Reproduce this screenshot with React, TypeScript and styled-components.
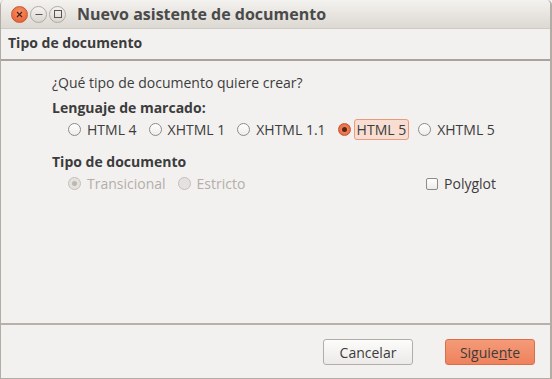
import styled, { createGlobalStyle, css } from "styled-components";

const GlobalStyle = createGlobalStyle`
  html, body {
    margin: 0;
    padding: 0;
    background: #f2f1f0;
  }
  body {
    font-family: "Open Sans", "Liberation Sans", sans-serif;
    font-size: 14px;
    color: #3c3c3c;
  }
`;

const Window = styled.div`
  width: 552px;
  height: 379px;
  box-sizing: border-box;
  display: flex;
  flex-direction: column;
  background: #f2f1f0;
  border-left: 1px solid #b3aca5;
  border-right: 2px solid #b3aca5;
  border-bottom: 1px solid #b3aca5;
  border-radius: 5px 5px 0 0;
  overflow: hidden;
`;

const TitleBar = styled.div`
  height: 28px;
  flex: none;
  display: flex;
  align-items: center;
  padding-left: 10px;
  background: linear-gradient(#f4f2ef, #dcd8d2);
  border-bottom: 1px solid #cfcac4;
`;

const Controls = styled.div`
  display: flex;
  gap: 2px;
  margin-right: 11px;
`;

const CtrlButton = styled.div<{ $close?: boolean }>`
  width: 17px;
  height: 17px;
  border-radius: 50%;
  box-sizing: border-box;
  display: flex;
  align-items: center;
  justify-content: center;
  ${({ $close }) =>
    $close
      ? css`
          background: radial-gradient(circle at 50% 35%, #f8916a, #e4582a);
          border: 1px solid #c9582e;
        `
      : css`
          background: linear-gradient(#f5f4f2, #d9d5d0);
          border: 1px solid #b0aaa3;
        `}
`;

const Title = styled.div`
  font-weight: bold;
  font-size: 16px;
  color: #4a4a4a;
`;

const Header = styled.div`
  height: 32px;
  flex: none;
  display: flex;
  align-items: center;
  padding: 0 0 3px 7px;
  box-sizing: border-box;
  font-weight: bold;
  border-bottom: 2px solid #a8a39d;
  color: #3c3c3c;
`;

const Content = styled.div`
  flex: 1;
  padding: 12px 0 0 51px;
  border-bottom: 2px solid #b7b1aa;
`;

const Question = styled.div`
  height: 20px;
  line-height: 20px;
`;

const SectionLabel = styled.div<{ $gap?: number }>`
  margin-top: ${({ $gap }) => $gap ?? 5}px;
  font-weight: bold;
  height: 19px;
  line-height: 19px;
`;

const OptionRow = styled.div`
  display: flex;
  align-items: center;
  height: 25px;
  padding-left: 16px;
  box-sizing: border-box;
`;

const Option = styled.label<{ $disabled?: boolean }>`
  display: flex;
  align-items: center;
  gap: 3px;
  margin-right: 9px;
  color: ${({ $disabled }) => ($disabled ? "#b4aea8" : "#3c3c3c")};
`;

const OptionText = styled.span<{ $selected?: boolean }>`
  padding: 0 2px;
  line-height: 19px;
  border: 1px solid transparent;
  border-radius: 3px;
  ${({ $selected }) =>
    $selected &&
    css`
      background: #f8ded2;
      border-color: #ec9a7c;
    `}
`;

const Radio = styled.span<{ $checked?: boolean; $disabled?: boolean }>`
  width: 13px;
  height: 13px;
  border-radius: 50%;
  box-sizing: border-box;
  display: inline-flex;
  align-items: center;
  justify-content: center;
  background: linear-gradient(#ffffff, #eeecea);
  border: 1px solid #8f8a85;
  ${({ $checked }) =>
    $checked &&
    css`
      background: radial-gradient(circle, #f39a78, #e0582c);
      border-color: #c75630;
    `}
  ${({ $disabled }) =>
    $disabled &&
    css`
      background: #e4e1de;
      border-color: #c4bfba;
    `}
`;

const Dot = styled.span<{ $disabled?: boolean }>`
  width: 5px;
  height: 5px;
  border-radius: 50%;
  background: ${({ $disabled }) => ($disabled ? "#bdb7b1" : "#5a2412")};
`;

const DisabledRow = styled(OptionRow)`
  width: 456px;
  height: 25px;
`;

const Spacer = styled.div`
  flex: 1;
`;

const Checkbox = styled.span`
  width: 12px;
  height: 12px;
  box-sizing: border-box;
  border: 1px solid #8f8a85;
  border-radius: 2px;
  background: linear-gradient(#ffffff, #eeecea);
`;

const ButtonBar = styled.div`
  height: 53px;
  flex: none;
  display: flex;
  align-items: center;
  justify-content: flex-end;
  gap: 32px;
  padding: 1px 15px 0 0;
  box-sizing: border-box;
`;

const Button = styled.button<{ $primary?: boolean }>`
  width: 90px;
  height: 26px;
  border-radius: 3px;
  font-family: inherit;
  font-size: 14px;
  color: #3c3c3c;
  cursor: pointer;
  ${({ $primary }) =>
    $primary
      ? css`
          background: linear-gradient(#f59a78, #ee825d);
          border: 1px solid #d9704c;
        `
      : css`
          background: linear-gradient(#fcfcfb, #eceae8);
          border: 1px solid #b3ada7;
        `}
  u {
    text-decoration: underline;
  }
`;

const formats = ["HTML 4", "XHTML 1", "XHTML 1.1", "HTML 5", "XHTML 5"];

export default function App() {
  return (
    <>
      <GlobalStyle />
      <Window>
        <TitleBar>
          <Controls>
            <CtrlButton $close>
              <svg width="7" height="7" viewBox="0 0 7 7">
                <path d="M1 1L6 6M6 1L1 6" stroke="#4a2314" strokeWidth="1.2" />
              </svg>
            </CtrlButton>
            <CtrlButton>
              <svg width="8" height="8" viewBox="0 0 8 8">
                <path d="M0.5 4.5H7.5" stroke="#5a5550" strokeWidth="1" />
              </svg>
            </CtrlButton>
            <CtrlButton>
              <svg width="8" height="8" viewBox="0 0 8 8">
                <rect x="0.5" y="0.5" width="7" height="7" fill="none" stroke="#5a5550" strokeWidth="1" />
              </svg>
            </CtrlButton>
          </Controls>
          <Title>Nuevo asistente de documento</Title>
        </TitleBar>
        <Header>Tipo de documento</Header>
        <Content>
          <Question>¿Qué tipo de documento quiere crear?</Question>
          <SectionLabel>Lenguaje de marcado:</SectionLabel>
          <OptionRow>
            {formats.map((f) => {
              const sel = f === "HTML 5";
              return (
                <Option key={f}>
                  <Radio $checked={sel}>{sel && <Dot />}</Radio>
                  <OptionText $selected={sel}>{f}</OptionText>
                </Option>
              );
            })}
          </OptionRow>
          <SectionLabel $gap={10}>Tipo de documento</SectionLabel>
          <DisabledRow>
            <Option $disabled>
              <Radio $disabled>
                <Dot $disabled />
              </Radio>
              <OptionText>Transicional</OptionText>
            </Option>
            <Option $disabled>
              <Radio $disabled />
              <OptionText>Estricto</OptionText>
            </Option>
            <Spacer />
            <Option>
              <Checkbox />
              <OptionText>Polyglot</OptionText>
            </Option>
          </DisabledRow>
        </Content>
        <ButtonBar>
          <Button>Cancelar</Button>
          <Button $primary>
            Siguie<u>n</u>te
          </Button>
        </ButtonBar>
      </Window>
    </>
  );
}
